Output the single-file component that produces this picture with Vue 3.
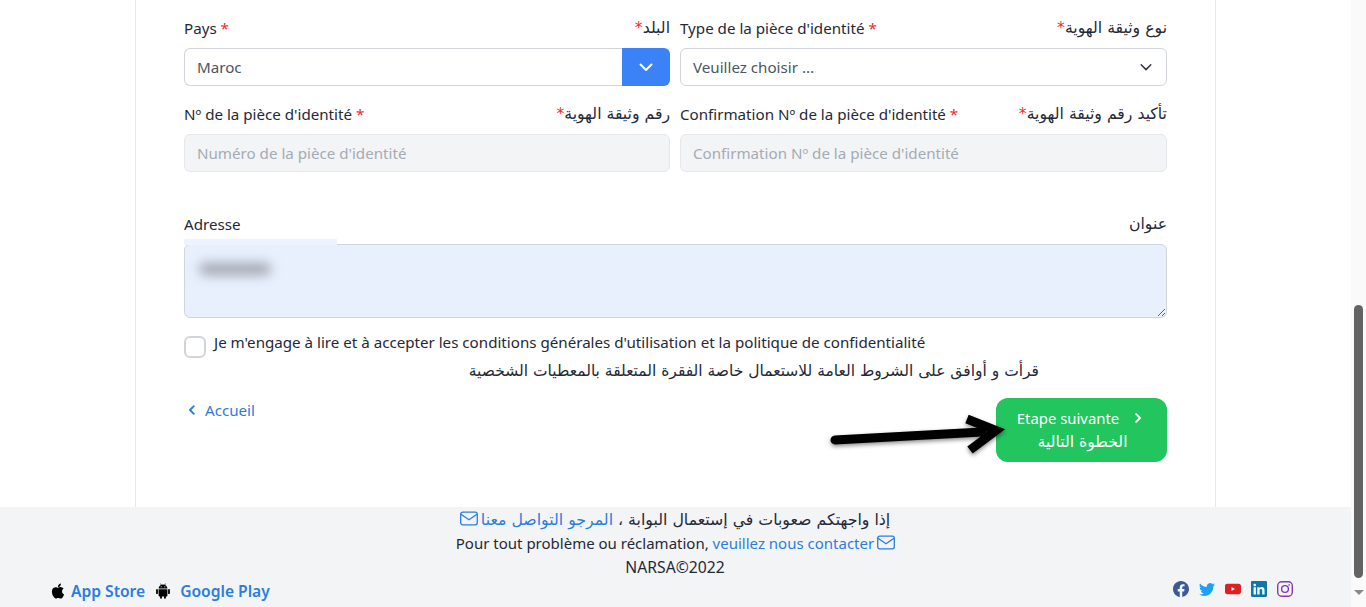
<script setup>
const socials = [
  { name: 'facebook', color: '#3b5998', vb: '0 0 16 16', d: 'M16 8.049c0-4.446-3.582-8.05-8-8.05C3.58 0-.002 3.603-.002 8.05c0 4.017 2.926 7.347 6.75 7.951v-5.625h-2.03V8.05H6.75V6.275c0-2.017 1.195-3.131 3.022-3.131.876 0 1.791.157 1.791.157v1.98h-1.009c-.993 0-1.303.621-1.303 1.258v1.51h2.218l-.354 2.326H9.25V16c3.824-.604 6.75-3.934 6.75-7.951z' },
  { name: 'twitter', color: '#1da1f2', vb: '0 0 16 16', d: 'M5.026 15c6.038 0 9.341-5.003 9.341-9.334 0-.14 0-.282-.006-.422A6.685 6.685 0 0 0 16 3.542a6.658 6.658 0 0 1-1.889.518 3.301 3.301 0 0 0 1.447-1.817 6.533 6.533 0 0 1-2.087.793A3.286 3.286 0 0 0 7.875 6.03a9.325 9.325 0 0 1-6.767-3.429 3.289 3.289 0 0 0 1.018 4.382A3.323 3.323 0 0 1 .64 6.575v.045a3.288 3.288 0 0 0 2.632 3.218 3.203 3.203 0 0 1-.865.115 3.23 3.23 0 0 1-.614-.057 3.283 3.283 0 0 0 3.067 2.277A6.588 6.588 0 0 1 .78 13.58a6.32 6.32 0 0 1-.78-.045A9.344 9.344 0 0 0 5.026 15z' },
  { name: 'youtube', color: '#e02020', vb: '0 0 16 16', d: 'M2.2 2.8h11.6c1.2 0 2.2 1 2.2 2.2v6c0 1.2-1 2.2-2.2 2.2H2.2C1 13.2 0 12.2 0 11V5c0-1.2 1-2.2 2.2-2.2zM6.5 6v4l3.4-2z' },
  { name: 'linkedin', color: '#0e76a8', vb: '0 0 16 16', d: 'M0 1.146C0 .513.526 0 1.175 0h13.65C15.474 0 16 .513 16 1.146v13.708c0 .633-.526 1.146-1.175 1.146H1.175C.526 16 0 15.487 0 14.854V1.146zm4.943 12.248V6.169H2.542v7.225h2.401zm-1.2-8.212c.837 0 1.358-.554 1.358-1.248-.015-.709-.52-1.248-1.342-1.248-.822 0-1.359.54-1.359 1.248 0 .694.521 1.248 1.327 1.248h.016zm4.908 8.212V9.359c0-.216.016-.432.08-.586.173-.431.568-.878 1.232-.878.869 0 1.216.662 1.216 1.634v3.865h2.401V9.25c0-2.22-1.184-3.252-2.764-3.252-1.274 0-1.845.7-2.165 1.193v.025h-.016a5.54 5.54 0 0 1 .016-.025V6.169h-2.4c.03.678 0 7.225 0 7.225h2.4z' }
]
</script>

<template>
  <div class="page">
    <div class="main">
      <div class="content">
        <form class="card">
          <div class="grid">
            <div class="field">
              <div class="label"><span>Pays <i>*</i></span><span class="ar">البلد<i>*</i></span></div>
              <div class="combo">
                <span class="combo-value">Maroc</span>
                <span class="drop">
                  <svg width="16" height="16" viewBox="0 0 16 16"><path d="M2.5 5.5 8 11l5.5-5.5" fill="none" stroke="#fff" stroke-width="2" stroke-linecap="round" stroke-linejoin="round"/></svg>
                </span>
              </div>
            </div>
            <div class="field">
              <div class="label"><span>Type de la pièce d'identité <i>*</i></span><span class="ar">نوع وثيقة الهوية<i>*</i></span></div>
              <div class="control select">
                <span>Veuillez choisir ...</span>
                <svg width="12" height="12" viewBox="0 0 12 12"><path d="M1.2 3.8 6 8.6l4.8-4.8" fill="none" stroke="#343a40" stroke-width="1.5" stroke-linecap="round" stroke-linejoin="round"/></svg>
              </div>
            </div>
            <div class="field">
              <div class="label"><span>Nº de la pièce d'identité <i>*</i></span><span class="ar">رقم وثيقة الهوية<i>*</i></span></div>
              <input class="control disabled" disabled placeholder="Numéro de la pièce d'identité" />
            </div>
            <div class="field">
              <div class="label"><span>Confirmation Nº de la pièce d'identité <i>*</i></span><span class="ar">تأكيد رقم وثيقة الهوية<i>*</i></span></div>
              <input class="control disabled" disabled placeholder="Confirmation Nº de la pièce d'identité" />
            </div>
          </div>

          <div class="address">
            <div class="label"><span>Adresse</span><span class="ar">عنوان</span></div>
            <div class="area-wrap">
              <textarea class="area"></textarea>
              <span class="smudge-top"></span>
              <span class="smudge"></span>
            </div>
          </div>

          <label class="consent">
            <span class="box"></span>
            <span>Je m'engage à lire et à accepter les conditions générales d'utilisation et la politique de confidentialité</span>
          </label>
          <div class="consent-ar ar">قرأت و أوافق على الشروط العامة للاستعمال خاصة الفقرة المتعلقة بالمعطيات الشخصية</div>

          <div class="actions">
            <a class="back">
              <svg width="10" height="10" viewBox="0 0 10 10"><path d="M6.8 1.2 3 5l3.8 3.8" fill="none" stroke="#2b7de0" stroke-width="1.9" stroke-linecap="round" stroke-linejoin="round"/></svg>
              <span>Accueil</span>
            </a>
            <button type="button" class="next">
              <span class="next-top">Etape suivante
                <svg width="10" height="10" viewBox="0 0 10 10"><path d="M3.2 1.2 7 5 3.2 8.8" fill="none" stroke="#fff" stroke-width="1.9" stroke-linecap="round" stroke-linejoin="round"/></svg>
              </span>
              <span class="next-ar ar">الخطوة التالية</span>
            </button>
          </div>

          <svg class="arrow" width="190" height="50" viewBox="0 0 190 50">
            <g fill="none" stroke="#000" stroke-width="9" stroke-linecap="round" stroke-linejoin="miter">
              <path d="M5 30 152 22"/>
              <path d="M137 9 166 20.5 140 40" stroke-linecap="butt"/>
            </g>
          </svg>
        </form>
      </div>

      <footer class="foot">
        <div class="foot-line ar"><span>إذا واجهتكم صعوبات في إستعمال البوابة ،</span> <a>المرجو التواصل معنا</a>
          <svg class="env" width="18" height="15" viewBox="0 0 18 15"><rect x=".7" y="1.2" width="16.6" height="12.6" rx="2" fill="none" stroke="#2b7de0" stroke-width="1.3"/><path d="M1 3.2 9 8.8 17 3.2" fill="none" stroke="#2b7de0" stroke-width="1.3"/></svg>
        </div>
        <div class="foot-line latin">Pour tout problème ou réclamation, <a>veuillez nous contacter</a>
          <svg class="env" width="18" height="15" viewBox="0 0 18 15"><rect x=".7" y="1.2" width="16.6" height="12.6" rx="2" fill="none" stroke="#2b7de0" stroke-width="1.3"/><path d="M1 3.2 9 8.8 17 3.2" fill="none" stroke="#2b7de0" stroke-width="1.3"/></svg>
        </div>
        <div class="foot-line brand">NARSA©2022</div>
        <div class="foot-bottom">
          <div class="stores">
            <svg width="18" height="18" viewBox="0 0 24 24"><path d="M18.71,19.5C17.88,20.74 17,21.95 15.66,21.97C14.32,22 13.89,21.18 12.37,21.18C10.84,21.18 10.37,21.95 9.1,22C7.79,22.05 6.8,20.68 5.96,19.47C4.25,17 2.94,12.45 4.7,9.39C5.57,7.87 7.13,6.91 8.82,6.88C10.1,6.86 11.32,7.75 12.11,7.75C12.89,7.75 14.37,6.68 15.92,6.84C16.57,6.87 18.39,7.1 19.56,8.82C19.47,8.88 17.39,10.1 17.41,12.63C17.44,15.65 20.06,16.66 20.09,16.67C20.06,16.74 19.67,18.11 18.71,19.5M13,3.5C13.73,2.67 14.94,2.04 15.94,2C16.07,3.17 15.6,4.35 14.9,5.19C14.21,6.04 13.07,6.7 11.95,6.61C11.8,5.46 12.36,4.26 13,3.5Z"/></svg>
            <a>App Store</a>
            <svg class="android" width="16" height="16" viewBox="0 0 16 16">
              <path d="M3.6 5.6a4.4 4 0 0 1 8.8 0zM3.6 6.2h8.8v6.3a.9.9 0 0 1-.9.9H4.5a.9.9 0 0 1-.9-.9z"/>
              <rect x="1.1" y="6.1" width="1.8" height="5" rx=".9"/><rect x="13.1" y="6.1" width="1.8" height="5" rx=".9"/>
              <rect x="5.1" y="12.5" width="1.9" height="3.2" rx=".9"/><rect x="9" y="12.5" width="1.9" height="3.2" rx=".9"/>
              <path d="M5.4 .5 6.4 2.3M10.6 .5 9.6 2.3" stroke="#000" stroke-width=".6"/>
              <circle cx="6.2" cy="3.8" r=".55" fill="#f3f4f6"/><circle cx="9.8" cy="3.8" r=".55" fill="#f3f4f6"/>
            </svg>
            <a>Google Play</a>
          </div>
          <div class="socials">
            <svg v-for="s in socials" :key="s.name" width="16" height="16" :viewBox="s.vb"><path :d="s.d" :fill="s.color" fill-rule="evenodd"/></svg>
            <svg width="16" height="16" viewBox="0 0 16 16" fill="none" stroke="#833ab4" stroke-width="1.4"><rect x=".7" y=".7" width="14.6" height="14.6" rx="4"/><circle cx="8" cy="8" r="3.4"/><circle cx="12.1" cy="3.9" r=".5" fill="#833ab4" stroke-width=".6"/></svg>
          </div>
        </div>
      </footer>
    </div>
    <div class="scrollbar">
      <span class="thumb"></span>
      <span class="down"></span>
    </div>
  </div>
</template>

<style>
html, body { margin: 0; overflow: hidden; }
</style>

<style scoped>
.page {
  display: flex;
  width: 1366px;
  height: 607px;
  overflow: hidden;
  background: #fff;
  font-family: "Noto Sans", "DejaVu Sans", sans-serif;
  font-size: 15.15px;
  color: #1f2937;
}
.main { flex: 1; display: flex; flex-direction: column; min-width: 0; }
.content { height: 507px; flex: none; padding-left: 135px; box-sizing: border-box; }
.card {
  position: relative;
  box-sizing: border-box;
  width: 1081px;
  height: 507px;
  padding: 0 48px;
  border-left: 1px solid #e5e7eb;
  border-right: 1px solid #e5e7eb;
}
.grid { display: grid; grid-template-columns: 486px 487px; column-gap: 10px; row-gap: 0; }
.field { height: 86px; display: flex; flex-direction: column; justify-content: flex-end; }
.label { display: flex; justify-content: space-between; align-items: center; height: 24px; margin-bottom: 8px; line-height: 24px; }
.label i { color: #ef2b2b; font-style: normal; }
.ar { font-family: "DejaVu Sans", sans-serif; font-size: 15.7px; direction: rtl; }
.control {
  box-sizing: border-box;
  width: 100%;
  height: 38px;
  border: 1px solid #d1d5db;
  border-radius: 6px;
  padding: 0 12px;
  font: inherit;
  color: #4b5563;
  display: flex;
  align-items: center;
}
.combo { display: flex; height: 38px; color: #4b5563; }
.combo-value {
  flex: 1;
  box-sizing: border-box;
  padding: 0 12px;
  display: flex;
  align-items: center;
  border: 1px solid #d1d5db;
  border-right: 0;
  border-radius: 6px 0 0 6px;
}
.drop {
  width: 48px;
  background: #3b82f6;
  border-radius: 0 6px 6px 0;
  display: flex;
  align-items: center;
  justify-content: center;
}
.select { justify-content: space-between; padding-right: 14px; }
.disabled { background: #f3f4f6; border-color: #e5e7eb; }
.disabled::placeholder { color: #a5abb5; opacity: 1; }

.address { margin-top: 40px; }
.area-wrap { position: relative; height: 74px; }
.area {
  display: block;
  box-sizing: border-box;
  width: 100%;
  height: 74px;
  background: #e8f0fe;
  border: 1px solid #d1d5db;
  border-radius: 6px;
  resize: vertical;
  outline: none;
}
.smudge-top {
  position: absolute;
  left: 0;
  top: -5px;
  width: 153px;
  height: 6px;
  background: #eef3fd;
}
.smudge {
  position: absolute;
  left: 15px;
  top: 19px;
  width: 72px;
  height: 12px;
  border-radius: 6px;
  background: #a0a4ae;
  filter: blur(6px);
}

.consent { display: flex; align-items: flex-start; gap: 8px; margin-top: 12px; height: 27px; line-height: 24px; }
.box {
  box-sizing: border-box;
  flex: none;
  width: 22px;
  height: 22px;
  margin-top: 6px;
  border: 2px solid #d1d5db;
  border-radius: 6px;
  background: #fff;
}
.consent-ar { text-align: right; width: 855px; height: 24px; line-height: 24px; margin-top: 2px; font-size: 15.5px; direction: ltr; }

.actions { display: flex; justify-content: space-between; align-items: flex-start; margin-top: 15px; }
.back { display: flex; align-items: center; gap: 8px; color: #2b7de0; line-height: 24px; padding-left: 3px; }
.next {
  box-sizing: border-box;
  width: 171px;
  height: 64px;
  border: 0;
  border-radius: 12px;
  background: #22c55e;
  color: #fff;
  font: inherit;
  display: flex;
  flex-direction: column;
  align-items: center;
  justify-content: center;
  line-height: 24px;
  padding: 0;
}
.next-top { display: flex; align-items: center; gap: 14px; font-size: 14.9px; margin-right: 3px; }
.next-ar { font-size: 15.7px; margin-left: 2px; }

.arrow {
  position: absolute;
  left: 694px;
  top: 410px;
  filter: drop-shadow(0 2px 2px rgba(0,0,0,.45));
}

.foot {
  position: relative;
  height: 100px;
  box-sizing: border-box;
  background: #f3f4f6;
  text-align: center;
  padding-right: 1px;
}
.foot-line { line-height: 24px; height: 24px; white-space: nowrap; }
.foot-line.ar { font-size: 15.75px; padding-top: 1px; height: 23px; line-height: 23px; }
.foot-line.latin { font-size: 15px; padding-left: 1px; }
.foot-line.brand { font-size: 15.7px; }
.foot a { color: #2b7de0; }
.env { vertical-align: -1px; margin-inline-start: 3px; }
.foot-bottom {
  display: flex;
  justify-content: space-between;
  align-items: center;
  padding: 0 57px 0 49px;
  height: 24px;
}
.stores { display: flex; align-items: center; gap: 4px; font-weight: 600; font-size: 15.6px; }
.android { margin-left: 6px; margin-right: 5px; }
.socials { display: flex; gap: 10px; margin-top: -4px; }

.scrollbar {
  flex: none;
  width: 15px;
  height: 607px;
  background: #fafafa;
  display: flex;
  flex-direction: column;
  align-items: center;
  box-sizing: border-box;
  padding-top: 305px;
}
.thumb { width: 9px; height: 273px; border-radius: 5px; background: #636363; }
.down {
  width: 0;
  height: 0;
  margin-top: 12px;
  border-left: 5px solid transparent;
  border-right: 5px solid transparent;
  border-top: 5px solid #8a8a8a;
}
</style>
